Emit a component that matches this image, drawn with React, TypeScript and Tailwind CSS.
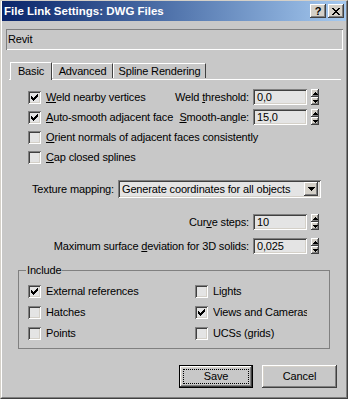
import type { ReactNode } from "react";

// Classic Win32 bevels as stacked inset shadows
const raised =
  "shadow-[inset_-1px_-1px_#404040,inset_1px_1px_#ffffff,inset_-2px_-2px_#808080,inset_2px_2px_#d4d0c8]";
const sunken =
  "shadow-[inset_1px_1px_#808080,inset_-1px_-1px_#ffffff,inset_2px_2px_#404040,inset_-2px_-2px_#d4d0c8]";

function Check() {
  return (
    <svg width="7" height="7" viewBox="0 0 7 7" shapeRendering="crispEdges">
      <path
        fill="#000"
        d="M6 0h1v1h-1z M5 1h2v1h-2z M0 2h1v1h-1z M4 2h3v1h-3z M0 3h2v1h-2z M3 3h3v1h-3z M0 4h5v1h-5z M1 5h3v1h-3z M2 6h1v1h-1z"
      />
    </svg>
  );
}

function Checkbox({ checked, children }: { checked?: boolean; children: ReactNode }) {
  return (
    <div className="flex items-center gap-[5px]">
      <div className={`flex h-[13px] w-[13px] shrink-0 items-center justify-center bg-[#e4e4e4] ${sunken}`}>
        {checked && <Check />}
      </div>
      <span className="whitespace-nowrap">{children}</span>
    </div>
  );
}

function Spinner() {
  return (
    <div className="flex h-[16px] w-[8px] flex-col">
      <div className={`flex h-[8px] items-center justify-center bg-[#d4d0c8] ${raised}`}>
        <svg width="5" height="3" viewBox="0 0 5 3" shapeRendering="crispEdges">
          <path d="M2 0h1v1h-1z M1 1h3v1h-3z M0 2h5v1h-5z" fill="#000" />
        </svg>
      </div>
      <div className={`flex h-[8px] items-center justify-center bg-[#d4d0c8] ${raised}`}>
        <svg width="5" height="3" viewBox="0 0 5 3" shapeRendering="crispEdges">
          <path d="M0 0h5v1h-5z M1 1h3v1h-3z M2 2h1v1h-1z" fill="#000" />
        </svg>
      </div>
    </div>
  );
}

function SpinField({ label, value }: { label: ReactNode; value: string }) {
  return (
    <div className="flex items-center">
      <span className="mr-[4px] whitespace-nowrap">{label}</span>
      <div className={`flex h-[16px] w-[54px] items-center bg-[#e4e4e4] pl-[4px] ${sunken}`}>{value}</div>
      <div className="ml-[4px]">
        <Spinner />
      </div>
    </div>
  );
}

export default function App() {
  return (
    <div className="h-[399px] w-[348px] border border-t-[#d4d0c8] border-l-[#d4d0c8] border-r-[#404040] border-b-[#404040] bg-[#c8c8c8] font-['Liberation_Sans',Arial,sans-serif] text-[11px] leading-[13px] tracking-[-0.15px] text-black">
      <div className="flex h-full flex-col border-b border-l border-r border-b-[#808080] border-l-white border-r-[#808080]">
        {/* Title bar */}
        <div className="flex h-[20px] shrink-0 items-center bg-gradient-to-r from-[#0a246a] to-[#a6caf0] pl-[2px] pr-[2px]">
          <span className="text-[11.5px] font-bold tracking-normal text-white">File Link Settings: DWG Files</span>
          <div className="ml-auto flex gap-[2px]">
            <div className={`flex h-[14px] w-[16px] items-center justify-center bg-[#d4d0c8] text-[11px] font-bold ${raised}`}>
              ?
            </div>
            <div className={`flex h-[14px] w-[16px] items-center justify-center bg-[#d4d0c8] ${raised}`}>
              <svg width="8" height="7" viewBox="0 0 8 7" shapeRendering="crispEdges">
                <path
                  fill="#000"
                  d="M0 0h2v1h-2z M6 0h2v1h-2z M1 1h2v1h-2z M5 1h2v1h-2z M2 2h4v1h-4z M3 3h2v1h-2z M2 4h4v1h-4z M1 5h2v1h-2z M5 5h2v1h-2z M0 6h2v1h-2z M6 6h2v1h-2z"
                />
              </svg>
            </div>
          </div>
        </div>

        {/* Name field */}
        <div className="ml-[4px] mt-[8px] flex h-[21px] w-[337px] items-center pl-[2px] shadow-[inset_1px_1px_#808080,inset_-1px_-1px_#ffffff]">
          Revit
        </div>

        {/* Tabs */}
        <div className="relative z-10 ml-[8px] mt-[11px] flex h-[18px] items-end">
          <div className="-mb-px flex h-[18px] w-[42px] items-start justify-center border-l border-t border-r border-l-white border-t-white border-r-[#404040] bg-[#c8c8c8] pt-[2px]">
            Basic
          </div>
          <div className="mb-px flex h-[15px] w-[61px] items-start justify-center border-l border-t border-r border-l-white border-t-white border-r-[#404040] pt-[1px]">
            Advanced
          </div>
          <div className="mb-px flex h-[15px] w-[93px] items-start justify-center border-l border-t border-r border-l-white border-t-white border-r-[#404040] pt-[1px]">
            Spline Rendering
          </div>
        </div>

        {/* Tab page */}
        <div className="ml-[7px] flex w-[332px] flex-col border-t border-t-white">
          <div className="mt-[7px] flex h-[20px] items-center justify-between pl-[19px] pr-[22px]">
            <Checkbox checked>
              <u>W</u>eld nearby vertices
            </Checkbox>
            <SpinField
              label={
                <>
                  Weld <u>t</u>hreshold:
                </>
              }
              value="0,0"
            />
          </div>
          <div className="flex h-[20px] items-center justify-between pl-[19px] pr-[22px]">
            <Checkbox checked>
              <u>A</u>uto-smooth adjacent face
            </Checkbox>
            <SpinField
              label={
                <>
                  <u>S</u>mooth-angle:
                </>
              }
              value="15,0"
            />
          </div>
          <div className="flex h-[20px] items-center pl-[19px]">
            <Checkbox>
              <u>O</u>rient normals of adjacent faces consistently
            </Checkbox>
          </div>
          <div className="flex h-[20px] items-center pl-[19px]">
            <Checkbox>
              <u>C</u>ap closed splines
            </Checkbox>
          </div>

          {/* Texture mapping */}
          <div className="mt-[13px] flex items-center justify-end pr-[20px]">
            <span className="mr-[4px]">Texture mapping:</span>
            <div className={`flex h-[18px] w-[203px] items-center bg-[#e4e4e4] pl-[4px] pr-[3px] ${sunken}`}>
              <span className="flex-1 whitespace-nowrap">Generate coordinates for all objects</span>
              <div className={`flex h-[14px] w-[14px] items-center justify-center bg-[#d4d0c8] ${raised}`}>
                <svg width="7" height="4" viewBox="0 0 7 4" shapeRendering="crispEdges">
                  <path fill="#000" d="M0 0h7v1h-7z M1 1h5v1h-5z M2 2h3v1h-3z M3 3h1v1h-1z" />
                </svg>
              </div>
            </div>
          </div>

          <div className="mt-[16px] flex justify-end pr-[22px]">
            <SpinField
              label={
                <>
                  Cur<u>v</u>e steps:
                </>
              }
              value="10"
            />
          </div>
          <div className="mt-[8px] flex justify-end pr-[22px]">
            <SpinField
              label={
                <>
                  Maximum surface <u>d</u>eviation for 3D solids:
                </>
              }
              value="0,025"
            />
          </div>

          {/* Include group */}
          <div className="ml-[9px] mt-[16px] flex h-[79px] w-[312px] flex-col border border-[#808080]">
            <span className="-mt-[7px] ml-[7px] block w-fit bg-[#c8c8c8] px-[1px]">Include</span>
            <div className="mt-[4px] flex h-[21px] items-center pl-[9px]">
              <div className="w-[167px]">
                <Checkbox checked>External references</Checkbox>
              </div>
              <Checkbox>Lights</Checkbox>
            </div>
            <div className="flex h-[21px] items-center pl-[9px]">
              <div className="w-[167px]">
                <Checkbox>Hatches</Checkbox>
              </div>
              <Checkbox checked>
                <span className="inline-block w-[94px] overflow-hidden align-top">Views and Cameras</span>
              </Checkbox>
            </div>
            <div className="flex h-[21px] items-center pl-[9px]">
              <div className="w-[167px]">
                <Checkbox>Points</Checkbox>
              </div>
              <Checkbox>UCSs (grids)</Checkbox>
            </div>
          </div>
        </div>

        {/* Buttons */}
        <div className="mt-[16px] flex justify-end gap-[9px] pr-[9px]">
          <div className="flex h-[23px] w-[74px] items-center justify-center border border-black bg-[#c8c8c8]">
            <div className={`flex h-full w-full items-center justify-center p-[3px] ${raised}`}>
              <div className="flex h-full w-full items-center justify-center border border-dotted border-black">
                Save
              </div>
            </div>
          </div>
          <div className={`flex h-[23px] w-[75px] items-center justify-center bg-[#c8c8c8] ${raised}`}>Cancel</div>
        </div>
      </div>
    </div>
  );
}
